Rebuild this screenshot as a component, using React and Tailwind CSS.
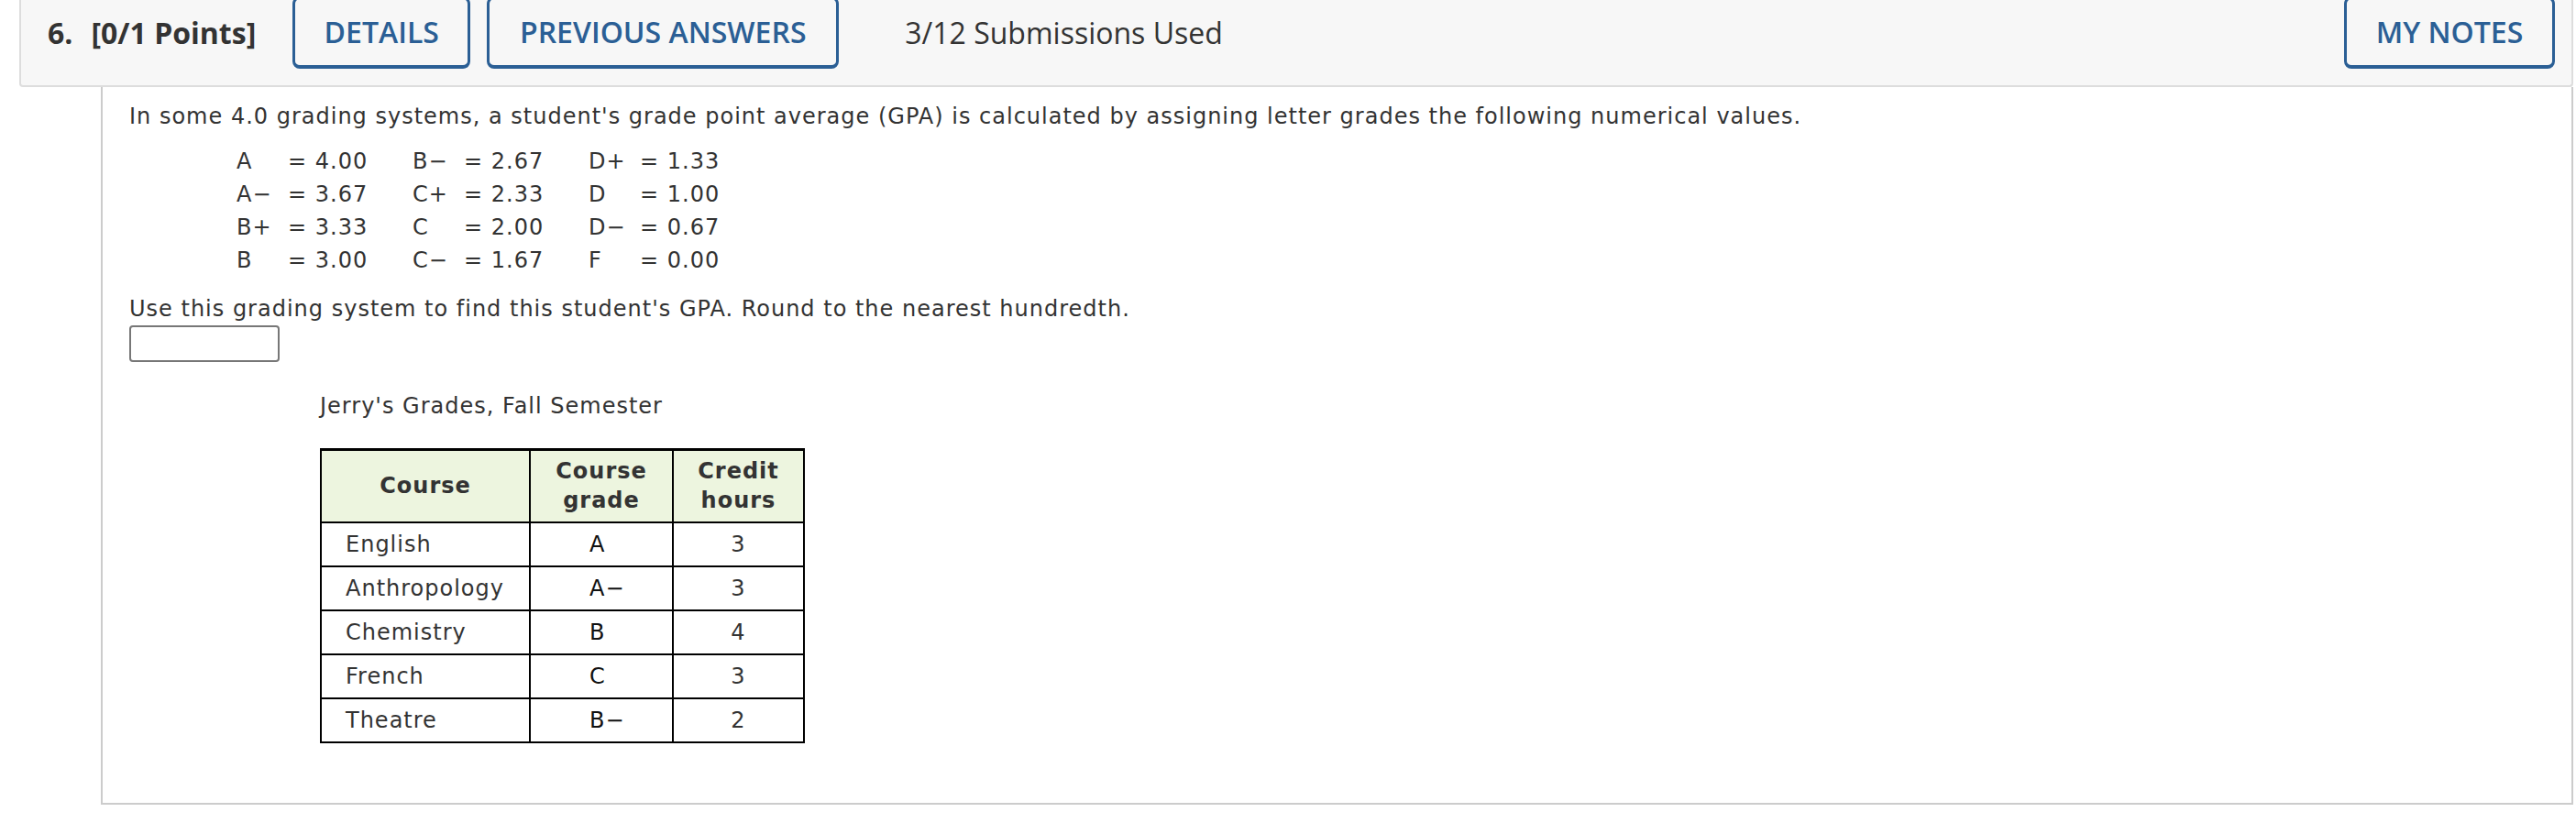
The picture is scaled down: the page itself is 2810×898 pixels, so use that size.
const blue = "border-[#2b5f95] text-[#2b5f95]";

const grades = [
  [["A", "4.00"], ["B\u2212", "2.67"], ["D+", "1.33"]],
  [["A\u2212", "3.67"], ["C+", "2.33"], ["D", "1.00"]],
  [["B+", "3.33"], ["C", "2.00"], ["D\u2212", "0.67"]],
  [["B", "3.00"], ["C\u2212", "1.67"], ["F", "0.00"]],
];

const courses = [
  ["English", "A", "3"],
  ["Anthropology", "A\u2212", "3"],
  ["Chemistry", "B", "4"],
  ["French", "C", "3"],
  ["Theatre", "B\u2212", "2"],
];

function HeadButton({ w, children }) {
  return (
    <div className={`-mt-[4px] h-[79px] ${w} shrink-0 border-[3px] border-b-4 rounded-[8px] ${blue} flex items-center justify-center font-semibold text-[32px]`}>
      {children}
    </div>
  );
}

export default function App() {
  return (
    <div className="w-[2810px] h-[898px] bg-white overflow-hidden">
      {/* question header bar */}
      <div className="ml-[21px] w-[2786px] h-[95px] bg-[#f7f7f7] border-x-2 border-b-2 border-[#dddddd] rounded-b-[4px] flex items-start pl-[29px] pr-[18px]"
        style={{ fontFamily: '"Open Sans", "Noto Sans", sans-serif' }}>
        <div className="-mt-[4px] h-[79px] flex items-center text-[32px] font-bold text-[#333]">
          <span>6.</span><span className="ml-[20px]">[0/1 Points]</span>
        </div>
        <div className="ml-[40px]"><HeadButton w="w-[194px]">DETAILS</HeadButton></div>
        <div className="ml-[18px]"><HeadButton w="w-[384px]">PREVIOUS ANSWERS</HeadButton></div>
        <div className="-mt-[4px] h-[79px] ml-[72px] flex items-center text-[32px] text-[#333]">3/12 Submissions Used</div>
        <div className="ml-auto"><HeadButton w="w-[230px]">MY NOTES</HeadButton></div>
      </div>

      {/* question body */}
      <div className="ml-[110px] w-[2697px] h-[783px] border-l-2 border-r-2 border-b-2 border-[#cccccc] pl-[29px] pt-[14px] text-[24px] leading-[36px] tracking-[1px] text-[#333]"
        style={{ fontFamily: '"DejaVu Sans", Verdana, sans-serif' }}>
        <p>In some 4.0 grading systems, a student's grade point average (GPA) is calculated by assigning letter grades the following numerical values.</p>
        <div className="mt-[13px] ml-[117px]">
          {grades.map((row, i) => (
            <div key={i} className="flex h-[36px] items-center">
              {row.map(([l, v]) => (
                <div key={l} className="w-[192px] flex">
                  <span className="w-[56px]">{l}</span>
                  <span>= {v}</span>
                </div>
              ))}
            </div>
          ))}
        </div>
        <p className="mt-[17px]">Use this grading system to find this student's GPA. Round to the nearest hundredth.</p>
        <input className="block w-[164px] h-[40px] border-2 border-[#777] rounded-[4px] bg-white" />

        <div className="ml-[208px] mt-[30px]">
          <div>Jerry's Grades, Fall Semester</div>
          <table className="mt-[28px] w-[527px] table-fixed border-collapse border-t-[3px] border-black">
            <thead>
              <tr className="h-[79px] bg-[#edf5df] text-[#333] font-bold leading-[32px]">
                <th className="w-[228px] border-2 border-black text-center">Course</th>
                <th className="w-[156px] border-2 border-black text-center">Course<br />grade</th>
                <th className="w-[143px] border-2 border-black text-center">Credit<br />hours</th>
              </tr>
            </thead>
            <tbody>
              {courses.map(([c, g, h]) => (
                <tr key={c} className="h-[48px]">
                  <td className="border-2 border-black pl-[26px] text-[#333]">{c}</td>
                  <td className="border-2 border-black pl-[64px] text-[#111]">{g}</td>
                  <td className="border-2 border-black text-center text-[#333]">{h}</td>
                </tr>
              ))}
            </tbody>
          </table>
        </div>
      </div>
    </div>
  );
}
